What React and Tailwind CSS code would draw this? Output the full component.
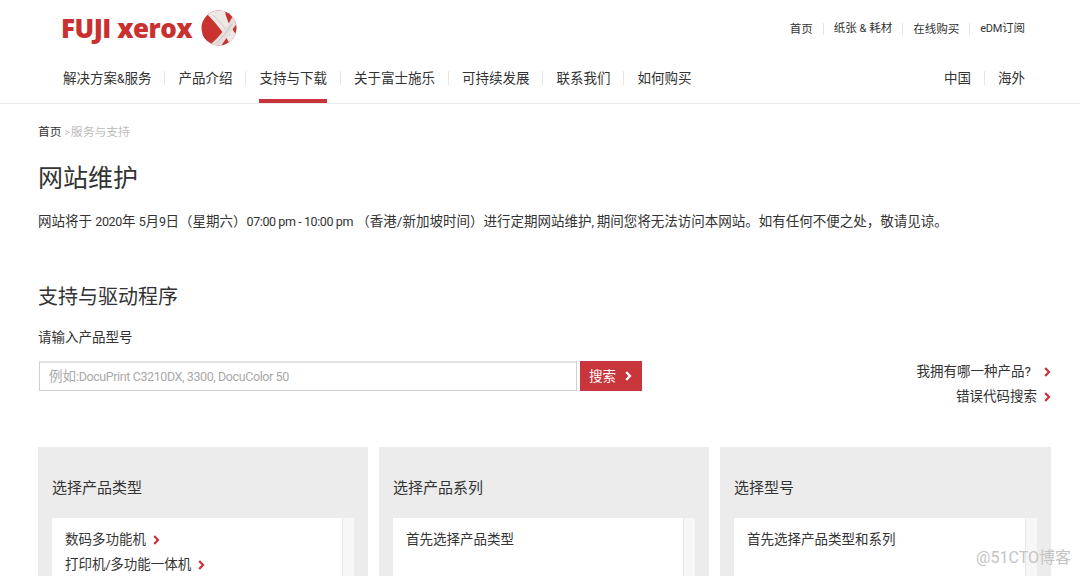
import React from "react";

const FONT = 'Roboto, "Noto Sans CJK SC", sans-serif';

const Chevron = ({ className = "" }) => (
  <svg width="7" height="10" viewBox="0 0 7 10" className={className}>
    <path d="M1.2 1 L5 5 L1.2 9" fill="none" stroke="currentColor" strokeWidth="2.2" />
  </svg>
);

/* latin runs are narrower than the chinese text around them */
const L = ({ children }) => <span className="text-[12.5px] tracking-[-0.4px]">{children}</span>;

/* drawn ball of the logo */
const LogoBall = () => (
  <svg width="36" height="36" viewBox="0 0 36 36">
    <defs>
      <clipPath id="ball">
        <circle cx="18" cy="18" r="17.5" />
      </clipPath>
    </defs>
    <circle cx="18" cy="18" r="17.5" fill="#c9332f" />
    <g clipPath="url(#ball)">
      {/* swoosh from upper left to lower right */}
      <path d="M6 4 Q16 -1 24 0 Q24 10 36 26 L30 36 Q22 20 6 4 Z" fill="#ece8e6" />
      <path d="M12 5 Q22 14 29 26" fill="none" stroke="#cfc9c7" strokeWidth="1" />
      {/* band from upper right to lower left */}
      <path d="M33 4 L37 12 Q28 24 20 36 L9 35 Q24 22 33 4 Z" fill="#e4dfdd" />
      <path d="M31 14 Q24 25 16 33" fill="none" stroke="#c9c3c1" strokeWidth="1" />
      {/* darker left shading */}
      <path d="M0 22 Q6 30 11 36 L0 36 Z" fill="#b12725" />
    </g>
  </svg>
);

const Sep = ({ h = "h-3" }) => <span className={`w-px ${h} bg-[#e6e6e6]`} />;

const topLinks = [
  "首页",
  <>纸张 <span className="text-[11px]">&amp;</span> 耗材</>,
  "在线购买",
  <><span className="text-[11px] tracking-[-0.3px]">eDM</span>订阅</>,
];
const navItems = [
  <>解决方案<span className="text-[12px]">&amp;</span>服务</>,
  "产品介绍",
  "支持与下载",
  "关于富士施乐",
  "可持续发展",
  "联系我们",
  "如何购买",
];

const Panel = ({ title, className, children }) => (
  <div className={`h-[200px] bg-[#ececec] px-[14px] pt-[31px] ${className}`}>
    <h3 className="text-[15px] leading-5 text-[#333]">{title}</h3>
    <div className="mt-[20px] flex h-[100px]">
      <div className="flex-1 bg-white pl-[13px] pt-[9px] text-[13.5px] leading-[25px] text-[#333]">{children}</div>
      <div className="w-[12px] border-l border-[#e8e8e8] bg-[#f7f7f7]" />
    </div>
  </div>
);

const ListItem = ({ children }) => (
  <div className="flex items-center gap-[7px]">
    <span>{children}</span>
    <Chevron className="text-[#c8323a]" />
  </div>
);

export default function App() {
  return (
    <div className="relative h-[576px] w-[1080px] overflow-hidden bg-white" style={{ fontFamily: FONT }}>
      {/* header */}
      <header className="h-[104px] border-b border-[#e9e9e9]">
        <div className="flex h-[56px] items-start justify-between pl-[61px] pr-[55px]">
          <div className="flex items-center gap-[9px] pt-[10px]">
            <span
              className="text-[26px] font-extrabold leading-9 text-[#c8312f]"
              style={{ fontFamily: '"Open Sans", sans-serif', letterSpacing: "-0.5px" }}
            >
              FUJI xerox
            </span>
            <LogoBall />
          </div>
          <div className="flex items-center gap-[10px] pt-[20px] text-[11.5px] leading-4 text-[#333]">
            {topLinks.map((l, i) => (
              <React.Fragment key={i}>
                {i > 0 && <Sep />}
                <span>{l}</span>
              </React.Fragment>
            ))}
          </div>
        </div>
        <div className="flex h-[47px] items-start justify-between pl-[63px] pr-[55px]">
          <nav className="flex items-start gap-[13px] text-[13.5px] text-[#333]">
            {navItems.map((n, i) => (
              <React.Fragment key={i}>
                {i > 0 && <span className="mt-[15px] h-[14px] w-px bg-[#e6e6e6]" />}
                <span className={`h-[47px] pt-[13px] leading-[18px] ${i === 2 ? "border-b-4 border-[#c8323a]" : ""}`}>{n}</span>
              </React.Fragment>
            ))}
          </nav>
          <div className="flex items-center gap-[13px] pt-[13px] text-[13.5px] leading-[18px] text-[#333]">
            <span>中国</span>
            <Sep h="h-[14px]" />
            <span>海外</span>
          </div>
        </div>
      </header>

      {/* main */}
      <main className="pl-[38px] pr-[29px]">
        <div className="pt-[20px] text-[11.8px] leading-4 text-[#333]">
          首页<span className="ml-[3px] text-[10px] text-[#bdbdbd]">&gt;</span>
          <span className="ml-[1px] text-[#bdbdbd]">服务与支持</span>
        </div>
        <h1 className="mt-[20px] text-[25px] font-normal leading-9 text-[#333]">网站维护</h1>
        <p className="mt-[14px] text-[13.5px] leading-5 text-[#333]">
          网站将于 <L>2020</L>年 <L>5</L>月<L>9</L>日（星期六）<L>07:00 pm - 10:00 pm</L> （香港/新加坡时间）进行定期网站维护<L>,</L> 期间您将无法访问本网站。如有任何不便之处，敬请见谅。
        </p>
        <h2 className="mt-[51px] text-xl font-normal leading-7 text-[#333]">支持与驱动程序</h2>
        <div className="mt-[16px] text-[13.5px] leading-5 text-[#333]">请输入产品型号</div>

        <div className="mt-[14px] flex items-start justify-between">
          <div className="flex pl-px">
            <div className="flex h-[30px] w-[538px] items-center border border-t-2 border-[#cfcfcf] border-t-[#e2e2e2] pl-[9px] text-[13.5px] text-[#a9a9a9]">
              <span>
                例如<L>:DocuPrint C3210DX, 3300, DocuColor 50</L>
              </span>
            </div>
            <button className="ml-[3px] flex h-[30px] w-[62px] items-center gap-[9px] bg-[#c8363c] pl-[9px] text-[13.5px] text-white">
              搜索
              <Chevron className="text-white" />
            </button>
          </div>
          <div className="flex flex-col items-end gap-[4px] text-[13.5px] leading-[21px] text-[#333]">
            <div className="flex items-center gap-[13px]">
              <span>我拥有哪一种产品?</span>
              <Chevron className="text-[#c8323a]" />
            </div>
            <div className="flex items-center gap-[7px]">
              <span>错误代码搜索</span>
              <Chevron className="text-[#c8323a]" />
            </div>
          </div>
        </div>

        <div className="mt-[40px] flex gap-[11px]">
          <Panel title="选择产品类型" className="w-[330px]">
            <ListItem>数码多功能机</ListItem>
            <ListItem>打印机<L>/</L>多功能一体机</ListItem>
          </Panel>
          <Panel title="选择产品系列" className="w-[330px]">首先选择产品类型</Panel>
          <Panel title="选择型号" className="flex-1">首先选择产品类型和系列</Panel>
        </div>
      </main>

      {/* watermark */}
      <div className="absolute bottom-[8px] right-[9px] text-base leading-5 text-[#c4c4c4]">@51CTO博客</div>
    </div>
  );
}
